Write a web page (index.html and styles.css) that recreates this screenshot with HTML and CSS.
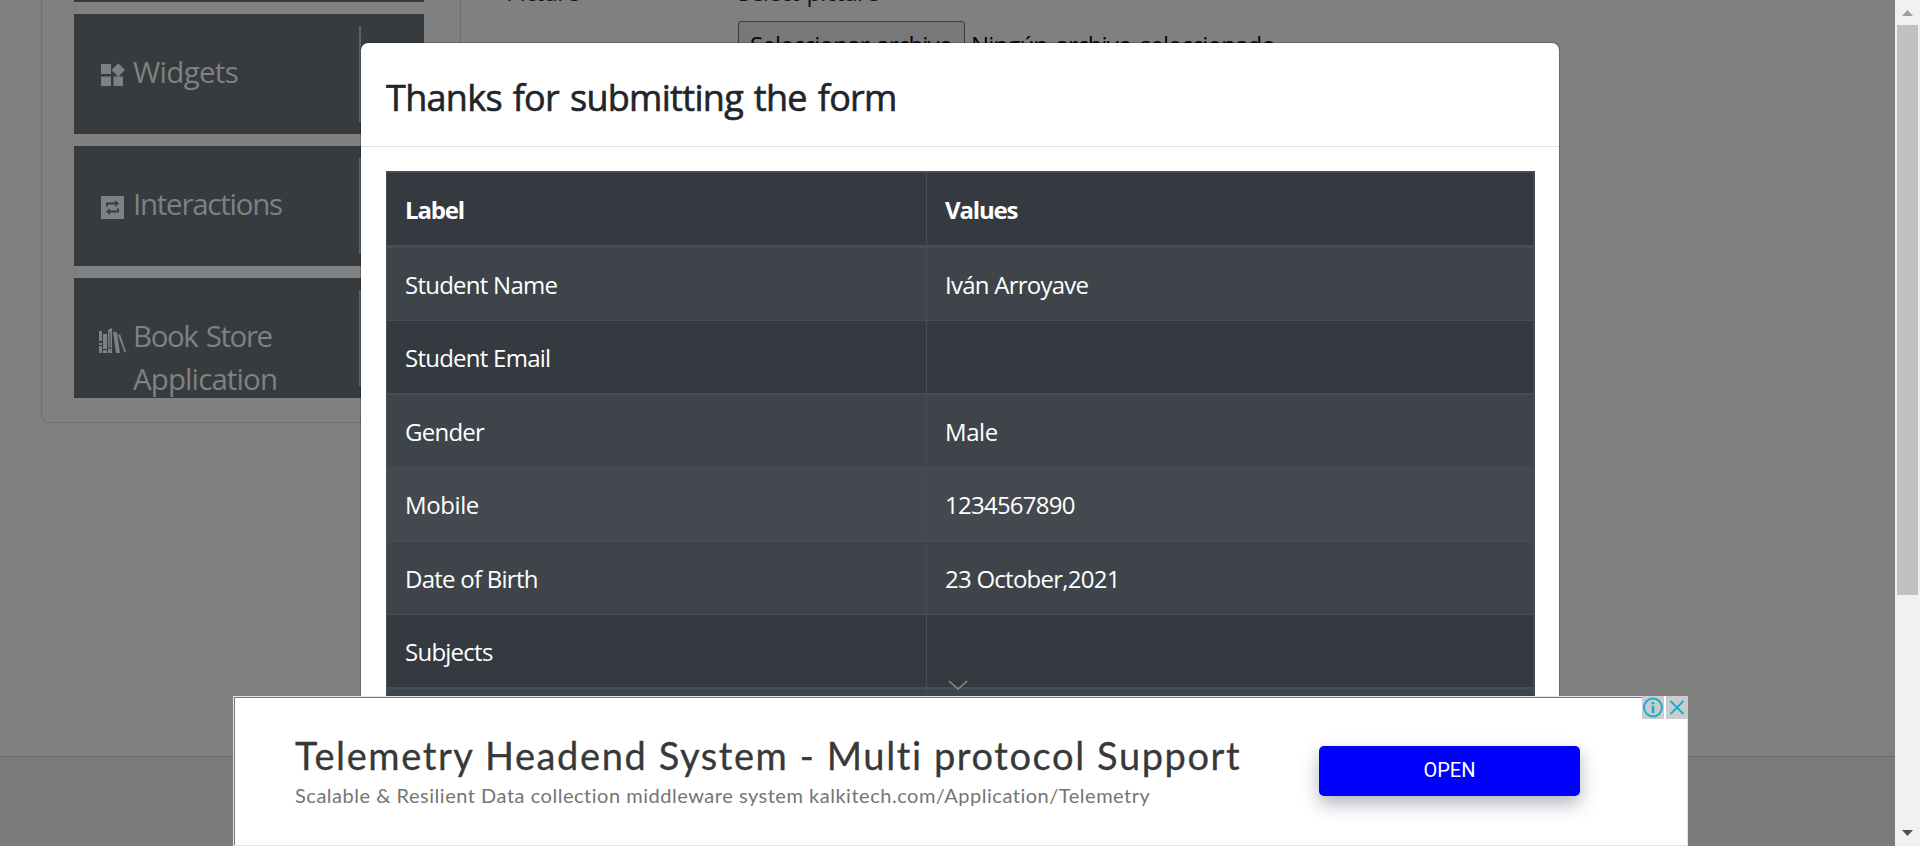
FILE: index.html
```html
<!DOCTYPE html>
<html lang="en">
<head>
<meta charset="utf-8">
<title>Student Registration Form</title>
<link rel="stylesheet" href="styles.css">
</head>
<body>
<div class="page">
  <main class="content">
    <aside class="sidebar">
      <div class="group group-prev"></div>
      <div class="group">
        <svg class="icon" viewBox="0 0 24 24"><path d="M0 1h10v10H0zM0 13.500h10V23H0zM12.500 13.500H22V23h-9.500zM17.300.3l6.700 6.700-6.700 6.700-6.700-6.700z"/></svg>
        <span class="group-name w-widgets">Widgets</span><i class="divider"></i>
      </div>
      <div class="group">
        <svg class="icon" viewBox="0 0 24 24"><path d="M0 1h23v23H0z"/><path class="loop" d="M6 11.500V8.500h9M17 13.500v3H8"/><path class="tip" d="M14 5.300l4 3.200-4 3.200zM9 13.300l-4 3.200 4 3.200z"/></svg>
        <span class="group-name w-inter">Interactions</span><i class="divider"></i>
      </div>
      <div class="group">
        <svg class="icon books" viewBox="0 0 27 25"><path d="M0 3h3v10H0zM0 15h3v2H0zM0 18h3v7H0zM4 6h4v15H4zM4 22h4v3H4zM9 2l4-2v25H9zM14 3.500l4 1L21 25h-4zM19 7l2-1 6 18-1.500.5z"/><path class="slit" d="M11 4v18M9 20h4"/></svg>
        <span class="group-name w-book">Book Store<br><span class="w-app">Application</span></span><i class="divider"></i>
      </div>
    </aside>
    <section class="form">
      <div class="form-label"><span class="t-picture">Picture</span></div>
      <div class="form-field">
        <span class="t-select">Select picture</span>
        <div class="file"><span class="file-btn"><span class="t-file">Seleccionar archivo</span></span><span class="t-none">Ningún archivo seleccionado</span></div>
      </div>
    </section>
  </main>
  <footer class="footer"></footer>
</div>

<div class="modal">
  <div class="modal-head"><h4>Thanks for submitting the form</h4></div>
  <div class="modal-body">
    <div class="table">
      <div class="row head"><div class="cell"><b>Label</b></div><div class="cell"><b>Values</b></div></div>
      <div class="row light"><div class="cell"><span>Student Name</span></div><div class="cell"><span>Iván Arroyave</span></div></div>
      <div class="row thick"><div class="cell"><span>Student Email</span></div><div class="cell"></div></div>
      <div class="row light"><div class="cell"><span>Gender</span></div><div class="cell"><span class="loose">Male</span></div></div>
      <div class="row hover"><div class="cell"><span class="loose">Mobile</span></div><div class="cell"><span>1234567890</span></div></div>
      <div class="row light"><div class="cell"><span>Date of Birth</span></div><div class="cell"><span>23 October,2021</span></div></div>
      <div class="row thick"><div class="cell"><span>Subjects</span></div><div class="cell"></div></div>
      <div class="row light"><div class="cell"></div><div class="cell"></div></div>
    </div>
  </div>
</div>

<svg class="collapse" viewBox="0 0 20 10"><path d="M.8 1L10 9l9.200-8"/></svg>
<div class="ad">
  <div class="ad-inner">
    <div class="ad-copy">
      <div class="ad-title">Telemetry Headend System - Multi protocol Support</div>
      <div class="ad-sub">Scalable &amp; Resilient Data collection middleware system kalkitech.com/Application/Telemetry</div>
    </div>
    <div class="ad-btn"><span>OPEN</span></div>
  </div>
  <div class="ad-tools">
    <svg viewBox="0 0 22 23"><circle cx="11" cy="11.500" r="8.900"/><path d="M11 9.800v7.500M11 6v2.300" class="info"/></svg>
    <svg viewBox="0 0 22 23"><path d="M4.500 5L17.500 18M17.500 5L4.500 18"/></svg>
  </div>
</div>

<div class="scrollbar">
  <svg class="arrow up" viewBox="0 0 11 6"><path d="M5.500 0L11 6H0z"/></svg>
  <div class="thumb"></div>
  <svg class="arrow down" viewBox="0 0 11 6"><path d="M0 0h11L5.500 6z"/></svg>
</div>
</body>
</html>
```
FILE: styles.css
```css
* { box-sizing: border-box; }
html, body { margin: 0; height: 846px; overflow: hidden; }
body { background: #808080; font-family: "Open Sans", "Noto Sans", sans-serif; font-size: 24px; position: relative; }
span, b { white-space: nowrap; }

.page { width: 1895px; height: 846px; display: flex; flex-direction: column; overflow: hidden; }
.content { height: 756px; display: flex; align-items: flex-start; padding-left: 41px; }
.sidebar { width: 420px; height: 423px; border: 1px solid #6f6f6f; border-top: 0; border-radius: 0 0 8px 8px; padding-left: 32px; display: flex; flex-direction: column; gap: 12px; }
.group { width: 350px; height: 120px; flex: none; background: #363b3f; padding: 47px 0 0 27px; display: flex; position: relative; color: #808080; }
.group-prev { height: 2px; padding: 0; }
.icon { width: 24px; height: 24px; margin-top: 2px; flex: none; fill: #808080; }
.books { width: 27px; height: 25px; margin: 3px -1px 0 -2px; }
.slit { stroke: #363b3f; stroke-width: .8; }
.loop { fill: none; stroke: #363b3f; stroke-width: 1.800; }
.tip { fill: #363b3f; }
.group-name { font-size: 29.500px; line-height: 43px; margin: -11px 0 0 8px; height: 86px; }
.w-widgets { letter-spacing: -.7px; }
.w-inter { letter-spacing: -1.250px; }
.w-book { letter-spacing: -1.400px; word-spacing: 2px; }
.w-app { letter-spacing: -.9px; }
.divider { position: absolute; left: 285px; top: 12px; width: 2px; height: 96px; background: #5f6263; }

.form { display: flex; color: #111314; margin-top: -25px; line-height: 34px; }
.form-label { width: 231px; padding-left: 45px; }
.form-field { padding-left: 46px; }
.t-picture { letter-spacing: -.8px; }
.t-select { letter-spacing: -1px; word-spacing: 3px; }
.t-file { letter-spacing: -.8px; word-spacing: 2px; }
.t-none { letter-spacing: -.8px; word-spacing: 2.500px; }
.file { display: flex; margin-top: 12px; gap: 6px; line-height: 48px; color: #080808; }
.file-btn { width: 227px; height: 50px; border: 1px solid #3b3b3b; border-radius: 3px; background: #787878; padding-left: 11px; line-height: 46px; }
.footer { flex: 1; border-top: 1px solid #696969; background: #7b7b7b; }

.modal { position: absolute; left: 360px; top: 42px; width: 1200px; height: 804px; overflow: hidden; background: #fff; background-clip: padding-box; border: 1px solid rgba(0,0,0,.2); border-radius: 8px; }
.modal-head { height: 104px; border-bottom: 1px solid #dee2e6; padding: 25px; }
h4 { margin: 2px 0 0; font-size: 36px; line-height: 56px; font-weight: 500; color: #212529; white-space: nowrap; letter-spacing: -.7px; word-spacing: 2.200px; -webkit-text-stroke: .6px #212529; }
.modal-body { padding: 24px 24px 0 25px; }
.table { border: 1px solid #454d55; border-top-width: 2px; border-right-width: 2px; color: #fff; }
.row { display: grid; grid-template-columns: 540px 1fr; height: 73px; border-bottom: 1px solid #454d55; background: #343a40; }
.row.head { height: 75px; border-bottom-width: 3px; }
.row.thick { height: 74px; border-bottom-width: 2px; }
.row.light { background: #3e444a; }
.row.hover { height: 74px; background: #44494f; }
.cell { padding: 19px 0 0 18px; line-height: 36px; letter-spacing: -.75px; }
.cell:first-child { border-right: 1px solid #454d55; }
.cell b { letter-spacing: -1.150px; }
.cell .loose { letter-spacing: -.4px; }

.collapse { position: absolute; left: 948px; top: 680px; width: 20px; height: 10px; fill: none; stroke: #8b8b8b; stroke-width: 1.500; }
.ad { position: absolute; left: 233px; top: 696px; width: 1455px; height: 150px; background: #fff; border: 1px solid #e5e5e5; }
.ad-inner { height: 148px; border: 1px solid #777; border-right: 0; border-bottom: 0; display: flex; padding-left: 60px; }
.ad-copy { width: 1024px; flex: none; padding-top: 33px; }
.ad-title { font-family: Lato, sans-serif; font-size: 38px; line-height: 48px; color: #383838; white-space: nowrap; letter-spacing: 1.600px; font-variant-ligatures: none; -webkit-text-stroke: .3px #383838; }
.ad-sub { font-family: Lato, sans-serif; font-size: 20px; line-height: 26px; color: #757575; white-space: nowrap; margin-top: 3px; letter-spacing: .52px; font-variant-ligatures: none; }
.ad-btn { width: 261px; height: 50px; margin-top: 48px; background: #00f; border-radius: 5px; box-shadow: 0 8px 18px rgba(40,45,75,.35); color: #fff; font-family: Roboto, sans-serif; font-size: 20px; line-height: 49px; text-align: center; }
.ad-tools { position: absolute; right: -1px; top: -1px; display: flex; gap: 2px; background: #fff; }
.ad-tools svg { width: 22px; height: 23px; background: #ccc; fill: none; stroke: #18aed0; stroke-width: 2; display: block; }
.ad-tools .info { stroke-width: 2.600; }

.scrollbar { position: absolute; right: 0; top: 0; width: 25px; height: 846px; background: #f1f1f1; display: flex; flex-direction: column; align-items: center; padding: 10px 0; }
.arrow { width: 11px; height: 6px; flex: none; }
.up { fill: #a0a0a0; }
.down { fill: #505050; margin-top: auto; }
.thumb { width: 21px; height: 570px; margin-top: 9px; background: #c1c1c1; }
```
